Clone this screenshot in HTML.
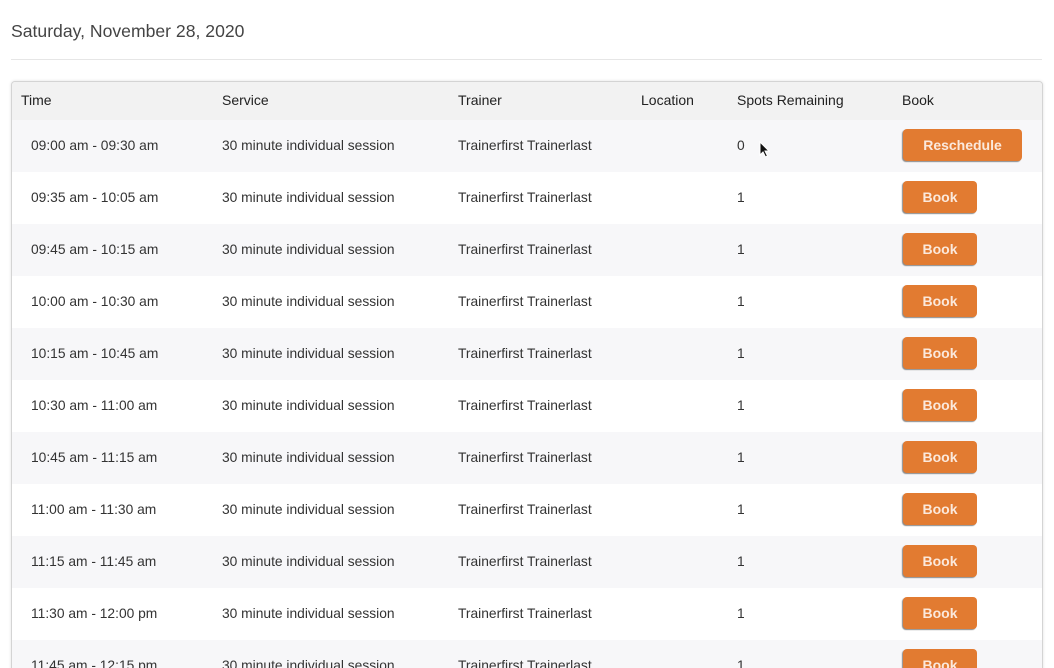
<!DOCTYPE html>
<html style="height:668px;overflow:hidden"><head><style>
html,body{height:668px;overflow:hidden}
body{margin:0;background:#fff;font-family:"Liberation Sans",Arial,sans-serif;width:1054px;position:relative}
h1{position:absolute;left:11px;top:21px;margin:0;font-weight:normal;font-size:17.6px;color:#444}
.hr{position:absolute;left:11px;top:59px;width:1031px;height:1px;background:#e6e6e6}
.tbl{position:absolute;left:11px;top:81px;width:1030px;height:590px;border:1px solid #d4d4d4;border-bottom:none;border-radius:4px 4px 0 0;box-shadow:0 0 3px rgba(0,0,0,.12);overflow:hidden;background:#fff}
.row{position:absolute;left:0;width:1030px;height:52px;font-size:13.8px;color:#333}
.row span,.hd span{position:absolute}
.hd{position:absolute;left:0;top:0;width:1030px;height:38px;background:#f2f2f2;font-size:14px;color:#222}
.hd span{top:10px}
.row span{top:18px}
.odd{background:#f7f7f9}
.btn{position:absolute;left:891px;top:9px;height:32px;width:74px;background:#e27b31;border-radius:4px;color:#fbe9dc;font-weight:bold;font-size:14px;text-align:center;line-height:32px;box-shadow:-1px 1px 1px #8a8a8a}
</style></head><body>
<h1>Saturday, November 28, 2020</h1>
<div class="hr"></div>
<div class="tbl">
<div class="hd"><span style="left:9px">Time</span><span style="left:210px">Service</span><span style="left:446px">Trainer</span><span style="left:629px">Location</span><span style="left:725px">Spots Remaining</span><span style="left:890px">Book</span></div>
<div class="row odd" style="top:38px"><span style="left:19px">09:00 am - 09:30 am</span><span style="left:210px">30 minute individual session</span><span style="left:446px">Trainerfirst Trainerlast</span><span style="left:725px">0</span><div class="btn" style="width:119px">Reschedule</div></div>
<div class="row" style="top:90px"><span style="left:19px">09:35 am - 10:05 am</span><span style="left:210px">30 minute individual session</span><span style="left:446px">Trainerfirst Trainerlast</span><span style="left:725px">1</span><div class="btn">Book</div></div>
<div class="row odd" style="top:142px"><span style="left:19px">09:45 am - 10:15 am</span><span style="left:210px">30 minute individual session</span><span style="left:446px">Trainerfirst Trainerlast</span><span style="left:725px">1</span><div class="btn">Book</div></div>
<div class="row" style="top:194px"><span style="left:19px">10:00 am - 10:30 am</span><span style="left:210px">30 minute individual session</span><span style="left:446px">Trainerfirst Trainerlast</span><span style="left:725px">1</span><div class="btn">Book</div></div>
<div class="row odd" style="top:246px"><span style="left:19px">10:15 am - 10:45 am</span><span style="left:210px">30 minute individual session</span><span style="left:446px">Trainerfirst Trainerlast</span><span style="left:725px">1</span><div class="btn">Book</div></div>
<div class="row" style="top:298px"><span style="left:19px">10:30 am - 11:00 am</span><span style="left:210px">30 minute individual session</span><span style="left:446px">Trainerfirst Trainerlast</span><span style="left:725px">1</span><div class="btn">Book</div></div>
<div class="row odd" style="top:350px"><span style="left:19px">10:45 am - 11:15 am</span><span style="left:210px">30 minute individual session</span><span style="left:446px">Trainerfirst Trainerlast</span><span style="left:725px">1</span><div class="btn">Book</div></div>
<div class="row" style="top:402px"><span style="left:19px">11:00 am - 11:30 am</span><span style="left:210px">30 minute individual session</span><span style="left:446px">Trainerfirst Trainerlast</span><span style="left:725px">1</span><div class="btn">Book</div></div>
<div class="row odd" style="top:454px"><span style="left:19px">11:15 am - 11:45 am</span><span style="left:210px">30 minute individual session</span><span style="left:446px">Trainerfirst Trainerlast</span><span style="left:725px">1</span><div class="btn">Book</div></div>
<div class="row" style="top:506px"><span style="left:19px">11:30 am - 12:00 pm</span><span style="left:210px">30 minute individual session</span><span style="left:446px">Trainerfirst Trainerlast</span><span style="left:725px">1</span><div class="btn">Book</div></div>
<div class="row odd" style="top:558px"><span style="left:19px">11:45 am - 12:15 pm</span><span style="left:210px">30 minute individual session</span><span style="left:446px">Trainerfirst Trainerlast</span><span style="left:725px">1</span><div class="btn">Book</div></div>
</div>
<svg style="position:absolute;left:759px;top:141px" width="12" height="18" viewBox="0 0 12 18"><path d="M1 1 L1 14 L4 11 L6.5 16 L8.5 15 L6 10 L10 10 Z" fill="#111" stroke="#fff" stroke-width="1"/></svg>
</body></html>
